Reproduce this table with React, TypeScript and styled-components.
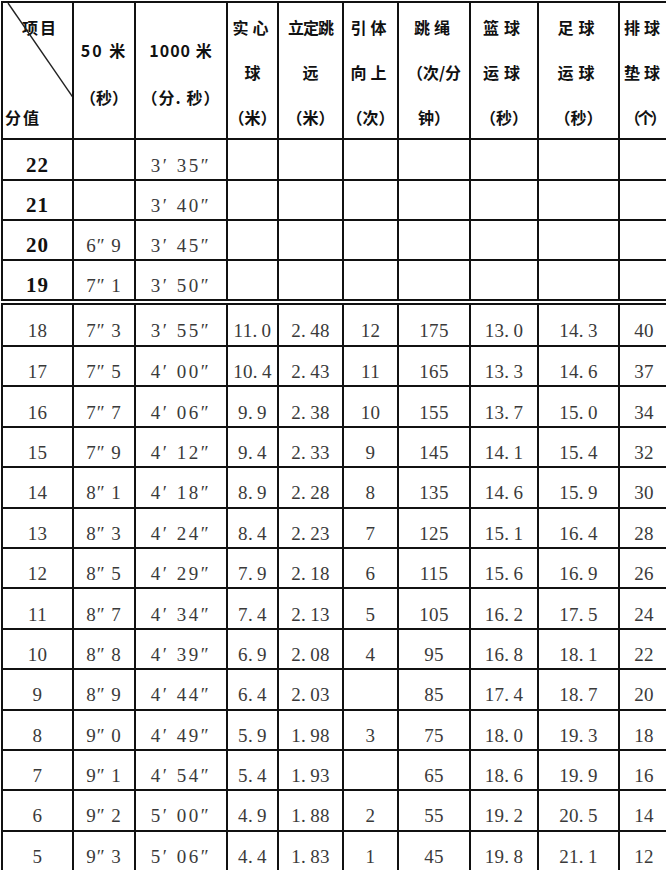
import React from 'react'
import styled, { createGlobalStyle } from 'styled-components'

const GlobalStyle = createGlobalStyle`
  html, body {
    margin: 0;
    padding: 0;
    background: #ffffff;
    overflow: hidden;
  }
`

const COLS = [71, 62, 92, 51, 65, 55, 72, 68, 81, 50]

const Page = styled.div`
  width: 700px;
  padding: 1px 0 0 1px;
`

const Sheet = styled.table<{ $gap?: number }>`
  border-collapse: collapse;
  table-layout: fixed;
  width: 667px;
  margin-top: ${(p) => p.$gap || 0}px;
`

const HeadCell = styled.td`
  border: 2px solid #111;
  padding: 0;
  height: 135px;
  position: relative;
  vertical-align: top;
  text-align: center;
  font-family: 'Noto Sans CJK SC', 'Noto Sans', sans-serif;
  font-weight: 700;
  font-size: 16px;
  color: #111;
  white-space: nowrap;
  overflow: hidden;
`

const Stack = styled.div<{ $top: number; $align?: string }>`
  height: 135px;
  box-sizing: border-box;
  padding-top: ${(p) => p.$top}px;
  display: flex;
  flex-direction: column;
  align-items: ${(p) => p.$align || 'center'};
  overflow: hidden;
`

const HeadLine = styled.span<{ $ls?: number; $lh?: number; $indent?: number }>`
  display: block;
  flex: none;
  height: ${(p) => p.$lh || 45}px;
  line-height: ${(p) => p.$lh || 45}px;
  letter-spacing: ${(p) => p.$ls || 0}px;
  padding-left: ${(p) => p.$indent || 0}px;
`

const Slash = styled.svg`
  position: absolute;
  left: 0;
  top: 0;
  width: 71px;
  height: 100px;
  pointer-events: none;
`

const Row = styled.tr<{ $h: number }>`
  height: ${(p) => p.$h}px;
`

const Cell = styled.td<{ $bold?: boolean; $ls?: number }>`
  border: 2px solid #111;
  padding: 11px 0 0 0;
  text-align: center;
  vertical-align: middle;
  font-family: 'Liberation Serif', 'Noto Sans CJK SC', serif;
  font-size: ${(p) => (p.$bold ? 21 : 19)}px;
  font-weight: ${(p) => (p.$bold ? 700 : 400)};
  color: ${(p) => (p.$bold ? '#111' : '#3a3a3a')};
  line-height: 1;
  letter-spacing: ${(p) => (p.$ls === undefined ? 0.5 : p.$ls)}px;
  white-space: nowrap;
  overflow: hidden;
`

type Head = { lines: string[]; ls?: number[]; lh?: number; top: number }

const HEADS: Head[] = [
  { lines: ['50 米', '（秒）'], ls: [2, 0], lh: 47, top: 24 },
  { lines: ['1000 米', '（分. 秒）'], ls: [1, 1], lh: 47, top: 24 },
  { lines: ['实心', '球', '（米）'], ls: [4, 0, 0], top: 2 },
  { lines: ['立定跳', '远', '（米）'], ls: [-1, 0, 0], top: 2 },
  { lines: ['引体', '向上', '（次）'], ls: [4, 4, 0], top: 2 },
  { lines: ['跳绳', '（次/分', '钟）'], ls: [4, 0, 0], top: 2 },
  { lines: ['篮球', '运球', '（秒）'], ls: [5, 5, 0], top: 2 },
  { lines: ['足球', '运球', '（秒）'], ls: [5, 5, 0], top: 2 },
  { lines: ['排球', '垫球', '（个）'], ls: [4, 4, -3], top: 2 },
]

const TOP_ROWS: string[][] = [
  ['22', '', '3′ 35″'],
  ['21', '', '3′ 40″'],
  ['20', '6″ 9', '3′ 45″'],
  ['19', '7″ 1', '3′ 50″'],
]

const ROWS: string[][] = [
  ['18', '7″ 3', '3′ 55″', '11.0', '2.48', '12', '175', '13.0', '14.3', '40'],
  ['17', '7″ 5', '4′ 00″', '10.4', '2.43', '11', '165', '13.3', '14.6', '37'],
  ['16', '7″ 7', '4′ 06″', '9.9', '2.38', '10', '155', '13.7', '15.0', '34'],
  ['15', '7″ 9', '4′ 12″', '9.4', '2.33', '9', '145', '14.1', '15.4', '32'],
  ['14', '8″ 1', '4′ 18″', '8.9', '2.28', '8', '135', '14.6', '15.9', '30'],
  ['13', '8″ 3', '4′ 24″', '8.4', '2.23', '7', '125', '15.1', '16.4', '28'],
  ['12', '8″ 5', '4′ 29″', '7.9', '2.18', '6', '115', '15.6', '16.9', '26'],
  ['11', '8″ 7', '4′ 34″', '7.4', '2.13', '5', '105', '16.2', '17.5', '24'],
  ['10', '8″ 8', '4′ 39″', '6.9', '2.08', '4', '95', '16.8', '18.1', '22'],
  ['9', '8″ 9', '4′ 44″', '6.4', '2.03', '', '85', '17.4', '18.7', '20'],
  ['8', '9″ 0', '4′ 49″', '5.9', '1.98', '3', '75', '18.0', '19.3', '18'],
  ['7', '9″ 1', '4′ 54″', '5.4', '1.93', '', '65', '18.6', '19.9', '16'],
  ['6', '9″ 2', '5′ 00″', '4.9', '1.88', '2', '55', '19.2', '20.5', '14'],
  ['5', '9″ 3', '5′ 06″', '4.4', '1.83', '1', '45', '19.8', '21.1', '12'],
]

// the source uses a wide full-stop, so leave a thin gap after the dot
const wideDot = (v: string) => v.replace('.', '.\u2009')

const Cols = () => (
  <colgroup>
    {COLS.map((w, i) => (
      <col key={i} style={{ width: w }} />
    ))}
  </colgroup>
)

const App = () => {
  return (
    <Page>
      <GlobalStyle />
      <Sheet>
        <Cols />
        <tbody>
          <Row $h={137}>
            <HeadCell>
              <Slash viewBox='0 0 71 100'>
                <line x1='5' y1='0' x2='71' y2='96' stroke='#222' strokeWidth='1.4' />
              </Slash>
              <Stack $top={2} $align='flex-start'>
                <HeadLine $indent={19} $ls={2}>
                  项目
                </HeadLine>
                <HeadLine />
                <HeadLine $indent={2} $ls={2}>
                  分值
                </HeadLine>
              </Stack>
            </HeadCell>
            {HEADS.map((h, i) => (
              <HeadCell key={i}>
                <Stack $top={h.top}>
                  {h.lines.map((l, j) => (
                    <HeadLine key={j} $lh={h.lh} $ls={h.ls ? h.ls[j] : 0}>
                      {l}
                    </HeadLine>
                  ))}
                </Stack>
              </HeadCell>
            ))}
          </Row>
          {TOP_ROWS.map((r, i) => (
            <Row key={i} $h={i === 0 ? 41 : 40}>
              {COLS.map((_, j) => (
                <Cell key={j} $bold={j === 0} $ls={j === 2 ? 2.5 : 1}>
                  {r[j] || ''}
                </Cell>
              ))}
            </Row>
          ))}
        </tbody>
      </Sheet>
      <Sheet $gap={2}>
        <Cols />
        <tbody>
          {ROWS.map((r, i) => (
            <Row key={i} $h={i === 0 ? 42 : 40.4}>
              {r.map((v, j) => (
                <Cell key={j} $ls={j === 2 ? 2.5 : j === 1 ? 1 : 0.3}>
                  {wideDot(v)}
                </Cell>
              ))}
            </Row>
          ))}
        </tbody>
      </Sheet>
    </Page>
  )
}

export default App
